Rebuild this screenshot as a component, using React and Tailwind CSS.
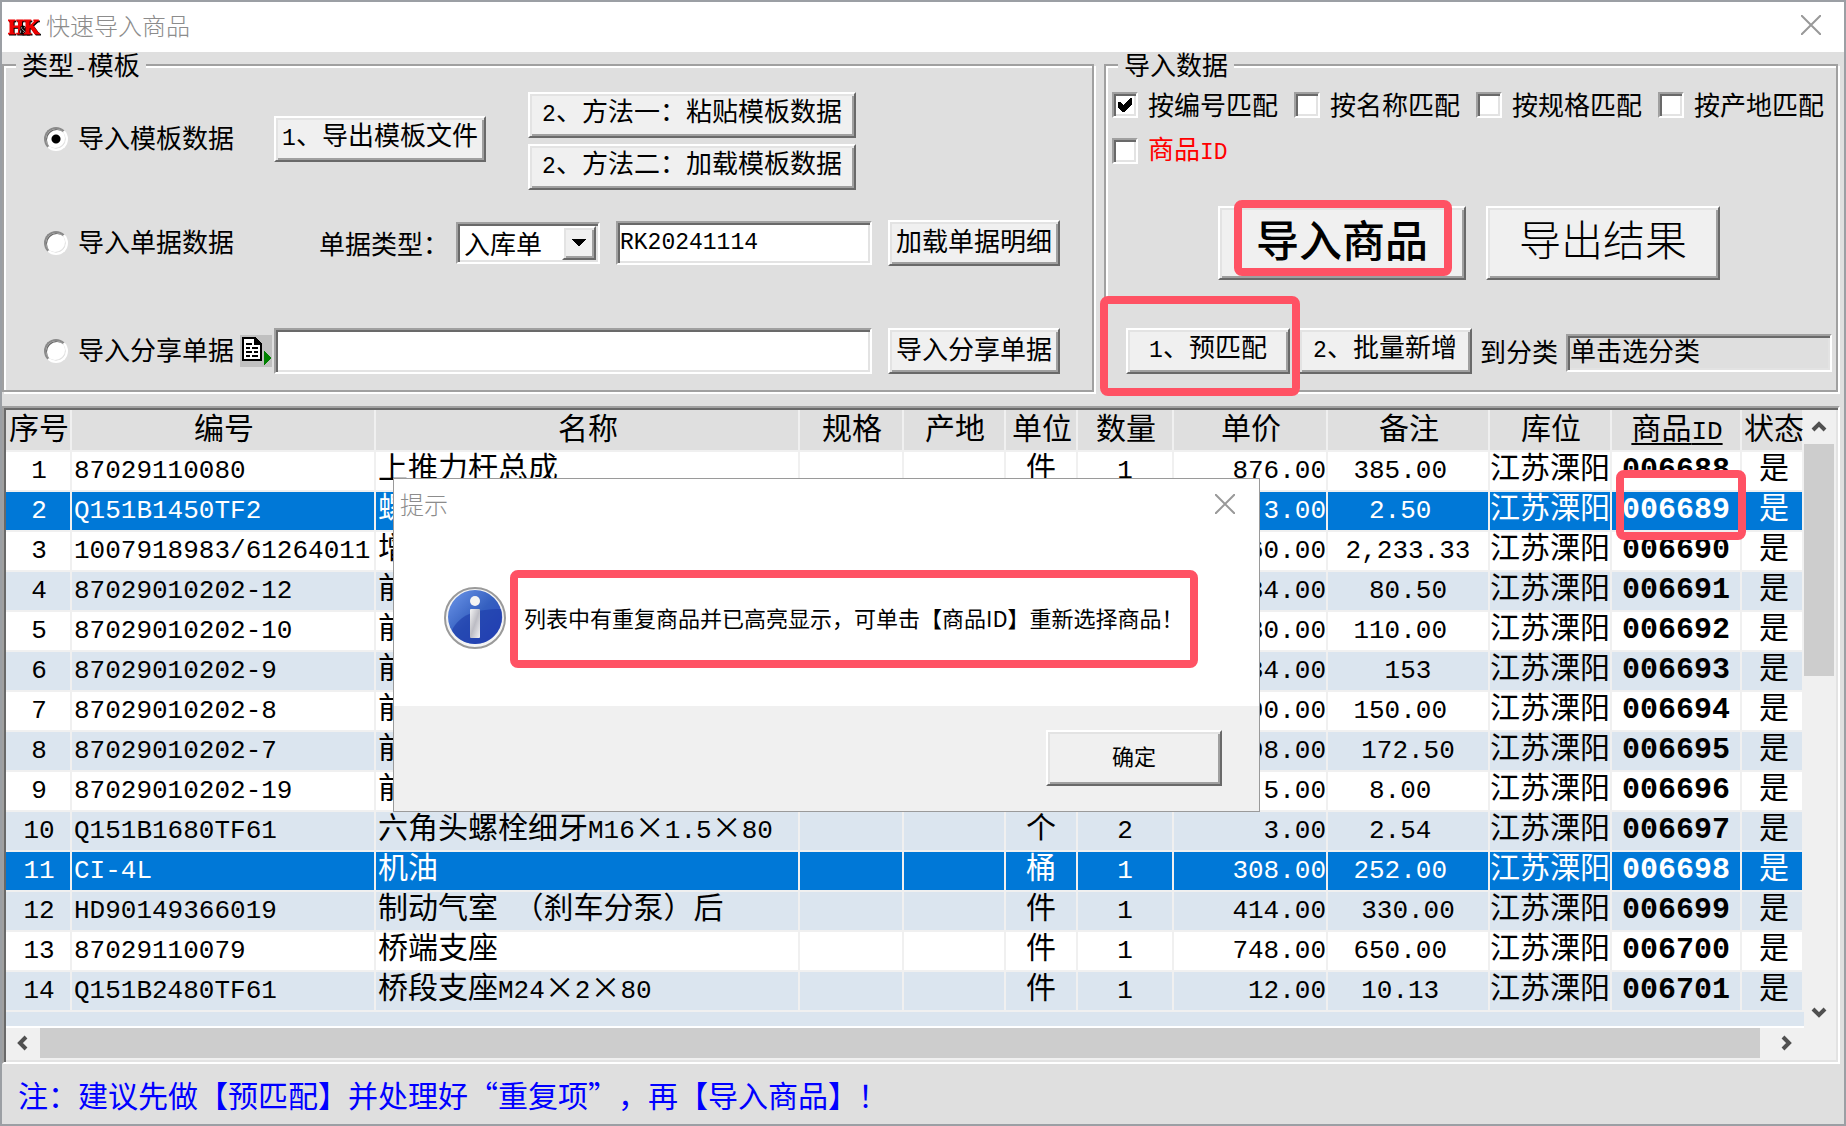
import React, { useState } from 'react';

const raised =
  'border-2 border-t-white border-l-white border-r-[#696969] border-b-[#696969] bg-[#f0f0f0] shadow-[inset_2px_2px_#e3e3e3,inset_-2px_-2px_#a0a0a0]';
const sunken =
  'border-2 border-t-[#a0a0a0] border-l-[#a0a0a0] border-r-white border-b-white shadow-[inset_2px_2px_#696969,inset_-2px_-2px_#e3e3e3]';

const COLUMNS = [
  { key: 'no', title: '序号', width: 66, cell: 'pl-[2px] text-center' },
  { key: 'code', title: '编号', width: 304, cell: 'pl-[2px]' },
  { key: 'name', title: '名称', width: 424, cell: 'pl-[2px]' },
  { key: 'spec', title: '规格', width: 104, cell: 'text-center' },
  { key: 'origin', title: '产地', width: 102, cell: 'text-center' },
  { key: 'unit', title: '单位', width: 72, cell: 'text-center' },
  { key: 'qty', title: '数量', width: 96, cell: 'text-center' },
  { key: 'price', title: '单价', width: 154, cell: 'text-right' },
  { key: 'remark', title: '备注', width: 162, cell: 'text-center' },
  { key: 'stock', title: '库位', width: 122, cell: 'text-center' },
  { key: 'id', title: '商品ID', width: 130, cell: 'text-center font-bold' },
  { key: 'status', title: '状态', width: 62, cell: 'pl-1 text-center' },
];

// Valores de observação mantêm o espaço final gravado no sistema
const ROWS = [
  ['87029110080', '上推力杆总成', '件', '1', '876.00', '385.00 '],
  ['Q151B1450TF2', '螺栓', '个', '1', '3.00', '2.50 '],
  ['1007918983/61264011', '增压器', '件', '1', '2,860.00', '2,233.33'],
  ['87029010202-12', '前支架', '件', '1', '84.00', '80.50'],
  ['87029010202-10', '前支架', '件', '1', '130.00', '110.00 '],
  ['87029010202-9', '前支架', '件', '1', '184.00', '153'],
  ['87029010202-8', '前支架', '件', '1', '190.00', '150.00 '],
  ['87029010202-7', '前支架', '件', '1', '198.00', '172.50'],
  ['87029010202-19', '前支架', '件', '1', '5.00', '8.00 '],
  ['Q151B1680TF61', '六角头螺栓细牙M16×1.5×80', '个', '2', '3.00', '2.54 '],
  ['CI-4L', '机油', '桶', '1', '308.00', '252.00 '],
  ['HD90149366019', '制动气室 （刹车分泵）后', '件', '1', '414.00', '330.00'],
  ['87029110079', '桥端支座', '件', '1', '748.00', '650.00 '],
  ['Q151B2480TF61', '桥段支座M24×2×80', '件', '1', '12.00', '10.13 '],
].map(([code, name, unit, qty, price, remark], i) => ({
  no: String(i + 1),
  code,
  name,
  spec: '',
  origin: '',
  unit,
  qty,
  price,
  remark,
  stock: '江苏溧阳',
  id: `00${6688 + i}`,
  status: '是',
}));

const DUPLICATED = ['2', '11'];

// Letras e números em fonte monoespaçada, o resto na fonte chinesa
const Mixed = ({ text, latin = 'text-[23px]' }) =>
  text.split(/([\x20-\x7e]+)/).map((part, i) =>
    i % 2 ? (
      <span key={i} className={`font-['Liberation_Mono',monospace] leading-none ${latin}`}>
        {part}
      </span>
    ) : (
      part
    )
  );

const Button = ({ children, className = '' }) => (
  <button type="button" className={`${raised} flex shrink-0 items-center justify-center whitespace-nowrap ${className}`}>
    {children}
  </button>
);

const FormButton = ({ text, className }) => (
  <Button className={`h-[46px] pb-[6px] ${className}`}>
    <span>
      <Mixed text={text} />
    </span>
  </Button>
);

const Highlight = ({ className }) => (
  <div className={`pointer-events-none absolute z-10 rounded-lg border-8 border-[#ff5264] ${className}`} />
);

const Group = ({ title, className, children }) => (
  <fieldset className="min-w-0 border-2 border-[#a0a0a0] shadow-[2px_2px_white,inset_2px_2px_white]">
    <legend className="relative ml-3 h-[26px] bg-[#dfdfdf] px-[6px] leading-[24px]">
      <Mixed text={title} />
    </legend>
    <div className={`pt-[14px] pb-4 ${className}`}>{children}</div>
  </fieldset>
);

const SourceRadio = ({ label, value, source, onChange, className }) => (
  <label className={`flex shrink-0 items-center gap-[10px] whitespace-nowrap ${className}`}>
    <input
      type="radio"
      name="source"
      checked={source === value}
      onChange={() => onChange(value)}
      className="size-6 appearance-none rounded-full border-2 border-t-[#8a8a8a] border-l-[#8a8a8a] border-r-white border-b-white bg-white bg-[radial-gradient(circle,black_4px,transparent_5px)] bg-no-repeat shadow-[inset_1px_1px_#696969,inset_-1px_-1px_#e3e3e3] not-checked:bg-none"
    />
    <span className="pb-1">{label}</span>
  </label>
);

const MatchCheckbox = ({ label, defaultChecked, className = '' }) => (
  <label className={`flex h-[26px] items-center gap-[10px] whitespace-nowrap ${className}`}>
    <span className="relative flex size-[26px]">
      <input
        type="checkbox"
        defaultChecked={defaultChecked}
        className={`${sunken} peer size-[26px] appearance-none bg-white`}
      />
      <svg
        viewBox="0 0 26 26"
        className="pointer-events-none absolute inset-0 hidden size-[26px] peer-checked:block"
        shapeRendering="crispEdges"
      >
        <path d="M6 10v6l4 4h2l8-8V6h-2l-7 7-3-3z" fill="black" />
      </svg>
    </span>
    <span className="pb-[2px]">
      <Mixed text={label} />
    </span>
  </label>
);

const Chevron = ({ d, className = '' }) => (
  <svg viewBox="0 0 16 16" className={`size-4 ${className}`} fill="none" stroke="#505050" strokeWidth="4">
    <path d={d} />
  </svg>
);

const CloseIcon = () => (
  <svg viewBox="0 0 20 20" className="size-5" stroke="#999999" strokeWidth="2">
    <path d="M0 0 20 20M20 0 0 20" />
  </svg>
);

const TemplatePanel = () => {
  const [source, setSource] = useState('template');
  const [docNo, setDocNo] = useState('RK20241114');

  return (
    <Group title="类型-模板" className="pr-8 pl-10">
      <div className="flex items-center">
        <div className="flex items-center pb-1">
          <SourceRadio label="导入模板数据" value="template" source={source} onChange={setSource} className="w-[230px]" />
          <FormButton text="1、导出模板文件" className="w-[212px]" />
        </div>
        <div className="ml-[42px] flex flex-col gap-[6px]">
          <FormButton text="2、方法一：粘贴模板数据" className="w-[328px]" />
          <FormButton text="2、方法二：加载模板数据" className="w-[328px]" />
        </div>
      </div>

      <div className="mt-[30px] flex items-center">
        <SourceRadio label="导入单据数据" value="doc" source={source} onChange={setSource} className="w-[275px]" />
        <label htmlFor="doc-type" className="w-[137px] shrink-0">
          单据类型：
        </label>
        <div className="relative shrink-0">
          <select id="doc-type" className={`${sunken} h-[42px] w-[144px] appearance-none bg-white pl-[6px]`}>
            <option>入库单</option>
          </select>
          <span className={`${raised} pointer-events-none absolute top-1 right-1 flex h-[34px] w-[34px] items-center justify-center`}>
            <svg viewBox="0 0 14 8" className="h-2 w-[14px]" shapeRendering="crispEdges">
              <path d="M0 0h14L7 8z" />
            </svg>
          </span>
        </div>
        <input
          aria-label="单据编号"
          value={docNo}
          onChange={(e) => setDocNo(e.target.value)}
          className={`${sunken} ml-4 h-11 min-w-0 flex-1 bg-white px-[2px] font-['Liberation_Mono',monospace] text-[23px]`}
        />
        <FormButton text="加载单据明细" className="ml-4 w-[172px]" />
      </div>

      <div className="mt-[62px] flex items-center">
        <SourceRadio label="导入分享单据" value="share" source={source} onChange={setSource} className="w-[196px]" />
        <button type="button" aria-label="粘贴" className="mr-[2px] size-8 shrink-0 bg-[#c0c0c0]">
          <svg viewBox="0 0 32 32" className="size-8" shapeRendering="crispEdges">
            <path d="M3 3h12l6 6v16H3z" fill="white" stroke="black" strokeWidth="2" />
            <path d="M14 2v8h8z" fill="black" />
            <path d="M6 9h6M6 13h4m2 0h6M6 17h6m2 0h4M6 21h4m2 0h6" stroke="black" strokeWidth="2" />
            <path d="M24 16v14l8-7z" fill="#008000" />
          </svg>
        </button>
        <input aria-label="分享单据" className={`${sunken} h-[46px] min-w-0 flex-1 bg-white px-1`} />
        <FormButton text="导入分享单据" className="ml-4 w-[172px]" />
      </div>
    </Group>
  );
};

const ImportPanel = () => (
  <Group title="导入数据" className="pr-1 pl-[6px]">
    <div className="flex gap-4">
      <MatchCheckbox label="按编号匹配" defaultChecked />
      <MatchCheckbox label="按名称匹配" />
      <MatchCheckbox label="按规格匹配" />
      <MatchCheckbox label="按产地匹配" />
    </div>
    <div className="mt-5 flex">
      <MatchCheckbox label="商品ID" className="text-[#ff0000]" />
    </div>
    <div className="mt-[42px] ml-[106px] flex gap-5">
      <div className="relative">
        <Button className="h-[74px] w-[248px] pb-[10px] text-[43px] font-medium">导入商品</Button>
        <Highlight className="-top-[6px] left-4 h-[76px] w-[218px]" />
      </div>
      <Button className="h-[74px] w-[234px] pb-[10px] text-[42px] font-light">导出结果</Button>
    </div>
    <div className="mt-12 ml-[14px] flex items-center">
      <div className="relative">
        <FormButton text="1、预匹配" className="w-[164px]" />
        <Highlight className="-top-8 -left-[26px] h-[100px] w-[200px]" />
      </div>
      <FormButton text="2、批量新增" className="ml-2 w-[174px]" />
      <label htmlFor="category" className="ml-2 shrink-0">
        到分类
      </label>
      <input
        id="category"
        readOnly
        value="单击选分类"
        className={`${sunken} mt-1 ml-2 h-[38px] min-w-0 flex-1 bg-[#dfdfdf] px-[2px] pb-[8px]`}
      />
    </div>
  </Group>
);

const GoodsTable = () => (
  <div className={`${sunken} mt-[14px] mr-1 bg-[#f0f0f0] p-[2px]`}>
    <div className="flex">
      <div className="min-w-0 flex-1">
        <div className="relative">
          <table className="w-full table-fixed border-separate border-spacing-0 text-[30px]">
            <colgroup>
              {COLUMNS.map((col) => (
                <col key={col.key} style={{ width: col.width }} />
              ))}
            </colgroup>
            <thead>
              <tr className="bg-[#dfdfdf]">
                {COLUMNS.map((col) => (
                  <th
                    key={col.key}
                    className={`border-r-2 border-b-2 border-[#f0f0f0] p-0 pl-[2px] font-normal whitespace-nowrap ${
                      col.key === 'id' ? 'underline decoration-2 underline-offset-4' : ''
                    }`}
                  >
                    <div className="h-10 leading-[32px]">
                      <Mixed text={col.title} latin="text-[26px]" />
                    </div>
                  </th>
                ))}
              </tr>
            </thead>
            <tbody>
              {ROWS.map((row, i) => {
                const selected = DUPLICATED.includes(row.no);
                const color = selected ? 'bg-[#0078d7] text-white' : i % 2 ? 'bg-[#dbe5ef]' : 'bg-white';
                return (
                  <tr key={row.no} className={color}>
                    {COLUMNS.map((col) => (
                      <td
                        key={col.key}
                        className={`border-r-2 border-b-2 border-[#f0f0f0] p-0 whitespace-pre ${col.cell}`}
                      >
                        <div className="h-[38px] leading-[26px]">
                          <Mixed text={row[col.key]} latin={col.key === 'id' ? 'text-[30px]' : 'text-[26px]'} />
                        </div>
                      </td>
                    ))}
                  </tr>
                );
              })}
            </tbody>
          </table>
          <Highlight className="top-[60px] right-[58px] h-[70px] w-[130px]" />
        </div>
        <div className="h-4 border-b-2 border-white bg-[#dbe5ef]" />
      </div>
      <div className="flex w-8 shrink-0 flex-col pr-[2px]">
        <div className="flex h-[34px] items-center justify-center">
          <Chevron d="M2 11 8 5l6 6" />
        </div>
        <div className="h-[232px] bg-[#cdcdcd]" />
        <div className="flex flex-1 items-end justify-center pb-2">
          <Chevron d="M2 5l6 6 6-6" />
        </div>
      </div>
    </div>
    <div className="flex h-8 items-center pr-8 pb-[2px]">
      <div className="flex w-[34px] justify-center">
        <Chevron d="M11 2 5 8l6 6" />
      </div>
      <div className="h-[30px] flex-1 bg-[#cdcdcd]" />
      <div className="flex w-11 justify-center pl-2">
        <Chevron d="M5 2l6 6-6 6" />
      </div>
    </div>
  </div>
);

const MessageDialog = () => (
  <div
    role="dialog"
    aria-label="提示"
    className="absolute top-[476px] left-[391px] z-20 w-[867px] border border-[#9a9a9a] bg-white font-['Noto_Sans_CJK_SC',sans-serif]"
  >
    <div className="flex h-[51px] items-center justify-between pr-6 pb-[2px] pl-[6px] text-2xl font-light text-[#8c8c8c]">
      提示
      <button type="button" aria-label="关闭">
        <CloseIcon />
      </button>
    </div>
    <div className="flex h-[176px] items-center pr-[67px] pl-[50px]">
      <svg viewBox="0 0 62 62" className="mr-1 size-[62px] shrink-0">
        <defs>
          <linearGradient id="ball" x1="0" y1="0" x2="1" y2="1">
            <stop offset="0" stopColor="#6f98ea" />
            <stop offset="0.5" stopColor="#3560c0" />
            <stop offset="1" stopColor="#2a42c0" />
          </linearGradient>
          <linearGradient id="stem" x1="0" y1="0" x2="1" y2="1">
            <stop offset="0" stopColor="#f4f4f4" />
            <stop offset="0.5" stopColor="#bcbcc4" />
            <stop offset="1" stopColor="#f0f0f4" />
          </linearGradient>
        </defs>
        <circle cx="31" cy="31" r="30" fill="#f4f4f4" stroke="#9a9a9a" strokeWidth="2" />
        <circle cx="31" cy="30" r="27" fill="url(#ball)" />
        <path d="M8 43C16 28 30 22 57 22A27 27 0 0 1 31 57Q14 56 8 43z" fill="#1d3aa8" opacity="0.6" />
        <circle cx="31" cy="14" r="5" fill="#f4f4f4" />
        <rect x="26" y="22" width="10" height="29" rx="1" fill="url(#stem)" />
      </svg>
      <p className="mt-[2px] h-[98px] flex-1 rounded-lg border-8 border-[#ff5264] px-[6px] text-[22px] leading-[78px] whitespace-nowrap">
        列表中有重复商品并已高亮显示，可单击【商品ID】重新选择商品！
      </p>
    </div>
    <div className="flex h-[105px] justify-end bg-[#f0f0f0] pt-6 pr-[37px]">
      <Button className="h-14 w-[176px] pb-[6px] text-[22px]">确定</Button>
    </div>
  </div>
);

const App = () => (
  <div className="relative flex min-h-screen w-full flex-col border-2 border-[#9b9fa4] bg-[#dfdfdf] font-['Noto_Sans_CJK_SC',sans-serif] text-[26px] leading-[26px] text-black [text-spacing-trim:space-all]">
    <header className="flex h-[50px] items-center gap-[6px] bg-white pr-[23px] pb-1 pl-[6px]">
      <svg
        viewBox="0 0 32 18"
        className="mt-1 h-[18px] w-8 drop-shadow-[1px_1px_0_black]"
        fill="#f00000"
        stroke="#f00000"
        fontFamily="Liberation Serif"
        fontWeight="bold"
        aria-label="H&K"
      >
        <text x="0" y="16" fontSize="20">H</text>
        <text x="11" y="16" fontSize="12" fill="white" stroke="black">&amp;</text>
        <text x="16" y="16" fontSize="20">K</text>
      </svg>
      <h1 className="flex-1 text-2xl font-light text-[#8c8c8c]">快速导入商品</h1>
      <button type="button" aria-label="关闭">
        <CloseIcon />
      </button>
    </header>

    <div className="grid grid-cols-[1092fr_734fr] gap-[10px] pr-[6px]">
      <TemplatePanel />
      <ImportPanel />
    </div>

    <GoodsTable />

    <p className="px-4 pt-[14px] text-[30px] leading-[32px] text-[#0000ff]">
      注：建议先做【预匹配】并处理好“重复项”，再【导入商品】！
    </p>

    <MessageDialog />
  </div>
);

export default App;
